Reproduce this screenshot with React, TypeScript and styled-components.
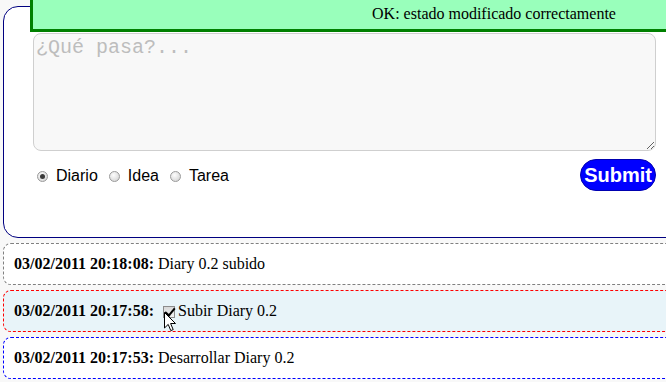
import React, { useState } from "react";
import styled, { createGlobalStyle } from "styled-components";

const GlobalStyle = createGlobalStyle`
  html, body {
    margin: 0;
    padding: 0;
    overflow: hidden;
    background: #f8f8f8;
    font-family: "Liberation Serif", "Times New Roman", serif;
    font-size: 16px;
    color: #000;
  }
`;

const Page = styled.div`
  position: relative;
  width: 720px;
  padding: 6px 0 0 3px;
`;

const Flash = styled.div`
  position: absolute;
  top: -10px;
  left: 30px;
  width: 928px;
  box-sizing: border-box;
  padding: 12px 0 6px;
  line-height: 18px;
  text-align: center;
  background: #99ffbb;
  border: 3px solid #008000;
  z-index: 2;
`;

const Panel = styled.form`
  background: #fff;
  border: 1px solid #000080;
  border-radius: 15px;
  padding: 26px 29px 46px;
  width: 623px;
`;

const StatusInput = styled.textarea`
  display: block;
  box-sizing: border-box;
  width: 623px;
  height: 118px;
  margin: 0;
  padding: 2px;
  background: #f8f8f8;
  border: 1px solid #cfcfcf;
  border-radius: 8px;
  font-family: "Liberation Mono", "Courier New", monospace;
  font-size: 20px;
  outline: none;

  &::placeholder {
    color: #bdbdbd;
  }
`;

const Controls = styled.div`
  display: flex;
  align-items: center;
  justify-content: space-between;
  margin-top: 8px;
`;

const Kinds = styled.div`
  display: flex;
  align-items: center;
  padding-left: 4px;
  padding-top: 2px;
  font-family: "Liberation Sans", Arial, sans-serif;
  font-size: 16px;
`;

const KindLabel = styled.label`
  display: flex;
  align-items: center;
  margin-right: 11px;
`;

const Radio = styled.input.attrs({ type: "radio" })`
  appearance: none;
  width: 11px;
  height: 11px;
  margin: 0 8px 0 0;
  border-radius: 50%;
  border: 1px solid #9a9a9a;
  box-sizing: border-box;
  background: radial-gradient(circle at 40% 35%, #fdfdfd 0%, #dcdcdc 70%, #c4c4c4 100%);
  display: grid;
  place-items: center;

  &:checked::after {
    content: "";
    width: 5px;
    height: 5px;
    border-radius: 50%;
    background: #3a3a3a;
  }
`;

const SubmitButton = styled.button`
  height: 32px;
  padding: 0 3px;
  border: 1px solid #0000b0;
  border-radius: 16px;
  background: #0000ff;
  color: #fff;
  font-family: "Liberation Sans", Arial, sans-serif;
  font-weight: bold;
  font-size: 20px;
  cursor: pointer;
`;

const Status = styled.div<{ $tone: "gray" | "red" | "blue"; $active?: boolean }>`
  margin-top: 5px;
  width: 700px;
  padding: 10px;
  line-height: 20px;
  border: 1px dashed
    ${(p) => (p.$tone === "red" ? "#ff0000" : p.$tone === "blue" ? "#0000ff" : "#808080")};
  border-radius: 8px;
  background: ${(p) => (p.$active ? "#e8f4f9" : "#fff")};
`;

const Stamp = styled.b`
  font-weight: bold;
`;

const TaskCheck = styled.span`
  position: relative;
  display: inline-block;
  vertical-align: -2px;
  margin: 0 3px 0 5px;
`;

const Check = styled.input.attrs({ type: "checkbox" })`
  appearance: none;
  display: block;
  position: relative;
  width: 12px;
  height: 12px;
  margin: 0;
  box-sizing: border-box;
  border: 1px solid #8c8c8c;
  background: linear-gradient(#d8d8d8, #f2f2f2);

  &:checked::after {
    content: "";
    position: absolute;
    left: 3px;
    top: -1px;
    width: 4px;
    height: 8px;
    border: solid #000;
    border-width: 0 2px 2px 0;
    transform: rotate(40deg);
  }
`;

const Pointer = styled.svg`
  position: absolute;
  left: 1px;
  top: 6px;
  pointer-events: none;
`;

type Entry = {
  time: string;
  text: string;
  tone: "gray" | "red" | "blue";
  task?: boolean;
  active?: boolean;
};

const entries: Entry[] = [
  { time: "03/02/2011 20:18:08:", text: "Diary 0.2 subido", tone: "gray" },
  { time: "03/02/2011 20:17:58:", text: "Subir Diary 0.2", tone: "red", task: true, active: true },
  { time: "03/02/2011 20:17:53:", text: "Desarrollar Diary 0.2", tone: "blue" },
];

export default function App() {
  const [kind, setKind] = useState("diario");
  const [done, setDone] = useState(true);

  return (
    <>
      <GlobalStyle />
      <Page>
        <Flash>OK: estado modificado correctamente</Flash>
        <Panel onSubmit={(e) => e.preventDefault()}>
          <StatusInput placeholder="¿Qué pasa?..." />
          <Controls>
            <Kinds>
              {[
                ["diario", "Diario"],
                ["idea", "Idea"],
                ["tarea", "Tarea"],
              ].map(([value, label]) => (
                <KindLabel key={value}>
                  <Radio
                    name="kind"
                    value={value}
                    checked={kind === value}
                    onChange={() => setKind(value)}
                  />
                  {label}
                </KindLabel>
              ))}
            </Kinds>
            <SubmitButton type="submit">Submit</SubmitButton>
          </Controls>
        </Panel>
        {entries.map((entry) => (
          <Status key={entry.time} $tone={entry.tone} $active={entry.active}>
            <Stamp>{entry.time}</Stamp>{" "}
            {entry.task && (
              <TaskCheck>
                <Check checked={done} onChange={() => setDone(!done)} />
                {/* mouse pointer captured in the screenshot */}
                <Pointer width="13" height="20" viewBox="0 0 13 20">
                  <path
                    d="M0.5 0.5 L0.5 16 L4.2 12.4 L6.8 18.6 L9.2 17.6 L6.6 11.5 L11.5 11.5 Z"
                    fill="#fff"
                    stroke="#000"
                    strokeWidth="1"
                    strokeLinejoin="miter"
                  />
                </Pointer>
              </TaskCheck>
            )}
            {entry.text}
          </Status>
        ))}
      </Page>
    </>
  );
}
